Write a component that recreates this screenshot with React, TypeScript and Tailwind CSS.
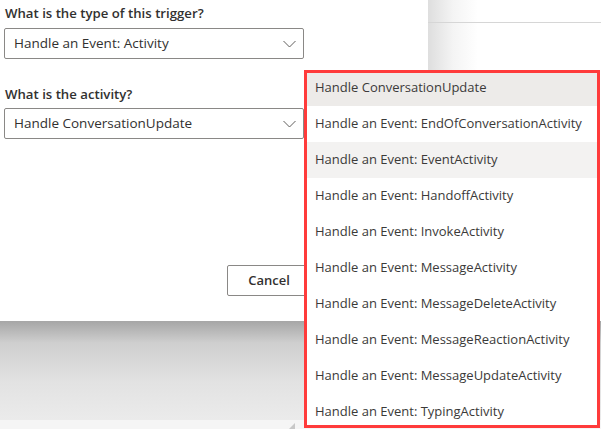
const options = [
  "Handle ConversationUpdate",
  "Handle an Event: EndOfConversationActivity",
  "Handle an Event: EventActivity",
  "Handle an Event: HandoffActivity",
  "Handle an Event: InvokeActivity",
  "Handle an Event: MessageActivity",
  "Handle an Event: MessageDeleteActivity",
  "Handle an Event: MessageReactionActivity",
  "Handle an Event: MessageUpdateActivity",
  "Handle an Event: TypingActivity",
];

function Chevron() {
  return (
    <svg width="13" height="8" viewBox="0 0 13 8" fill="none">
      <path d="M0.5 1 L6.5 7 L12.5 1" stroke="#605e5c" strokeWidth="1" />
    </svg>
  );
}

function Select({ value }: { value: string }) {
  return (
    <div className="flex h-[31px] w-[300px] items-center justify-between rounded-[2px] border border-[#8a8886] pl-[9px] pr-[7px] text-[13.5px] text-[#323130]">
      <span>{value}</span>
      <Chevron />
    </div>
  );
}

export default function App() {
  return (
    <div className="relative flex h-[429px] w-[601px] flex-col overflow-hidden bg-white font-['Open_Sans',sans-serif]">
      <div className="flex h-[321px]">
        {/* Dialog */}
        <div className="flex w-[428px] flex-col bg-white pl-[4px]">
          <label className="mt-[4px] pl-[1px] text-[13.2px] font-semibold leading-[19px] text-[#323130]">
            What is the type of this trigger?
          </label>
          <div className="mt-[5px]">
            <Select value="Handle an Event: Activity" />
          </div>
          <label className="mt-[26px] pl-[1px] text-[13.2px] font-semibold leading-[19px] text-[#323130]">
            What is the activity?
          </label>
          <div className="mt-[4px]">
            <Select value="Handle ConversationUpdate" />
          </div>
          <div className="mt-[126px] flex">
            <button className="ml-[223px] h-[31px] w-[84px] rounded-[2px] border border-[#8a8886] bg-white pt-[1px] text-[13px] font-semibold text-[#323130]">
              Cancel
            </button>
          </div>
        </div>
        {/* Page behind */}
        <div className="flex-1 bg-[linear-gradient(to_right,#dedede,#f4f4f4_25px,#ffffff_50px)]">
          <div className="mt-[22px] h-px bg-[#d6d6d6]" />
        </div>
      </div>
      <div className="h-[99px] bg-[linear-gradient(to_bottom,#a6a6a6,#cfcfcf_22px,#e2e2e2_60px,#ebebeb)]" />
      <div className="relative flex-1 bg-[#f5f5f5]">
        <div className="absolute left-[289px] top-[3px] h-0 w-0 border-b-[6px] border-l-[6px] border-b-[#c8c8c8] border-l-transparent" />
      </div>

      {/* Dropdown list */}
      <div className="absolute left-[304px] top-[70px] h-[358px] w-[296px] overflow-hidden bg-white">
        {options.map((o, i) => (
          <div
            key={o}
            className={`flex h-[36px] items-center pl-[11px] text-[13px] text-[#3b3a39] ${
              i === 0 ? "bg-[#edebe9]" : i === 2 ? "bg-[#f3f2f1]" : "bg-white"
            }`}
          >
            {o}
          </div>
        ))}
        <div className="pointer-events-none absolute inset-0 border-[3px] border-[#ff3b3b]" />
      </div>
    </div>
  );
}
